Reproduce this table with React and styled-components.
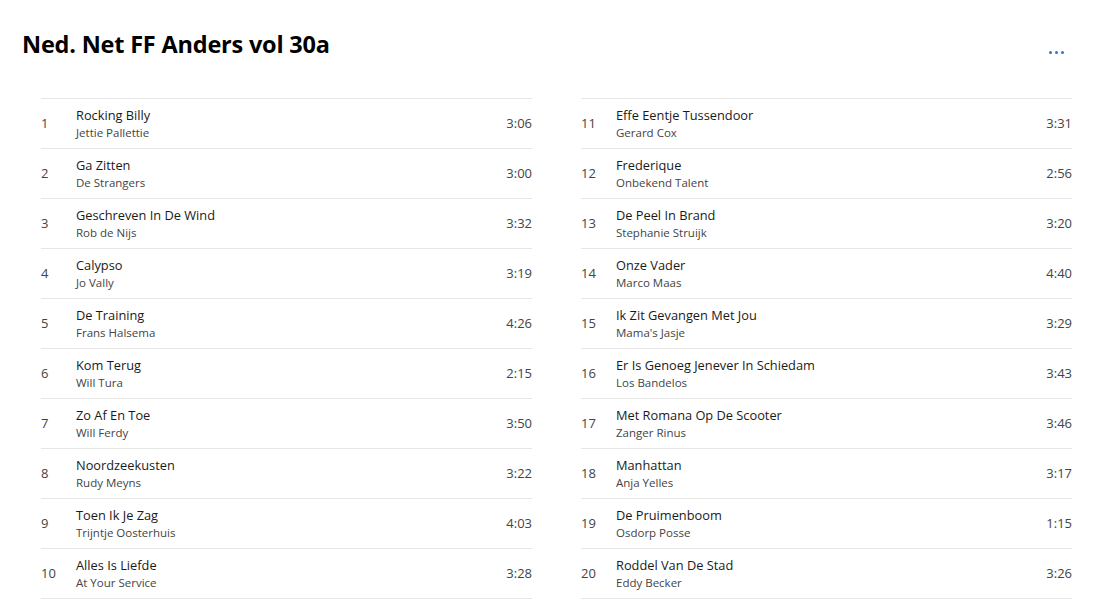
import React from "react";
import styled, { createGlobalStyle } from "styled-components";

const Global = createGlobalStyle`
  html, body { margin: 0; padding: 0; background: #ffffff; }
  body { font-family: "Open Sans", "Noto Sans", sans-serif; color: #1a1a1a; }
`;

const Page = styled.div`
  width: 1108px;
  height: 600px;
  overflow: hidden;
  box-sizing: border-box;
  padding: 0 36px 0 22px;
`;

const Header = styled.div`
  display: flex;
  align-items: flex-start;
  justify-content: space-between;
  height: 98px;
  box-sizing: border-box;
  padding-top: 28px;
`;

const Title = styled.h1`
  margin: 0;
  font-family: "Open Sans", sans-serif;
  font-weight: 700;
  font-size: 23.5px;
  line-height: 32px;
  color: #000;
  letter-spacing: -0.2px;
`;

const MoreButton = styled.button`
  border: none;
  background: transparent;
  padding: 0;
  margin: 23px 8px 0 0;
  display: flex;
  gap: 3px;
  cursor: pointer;
`;

const Dot = styled.span`
  width: 3px;
  height: 3px;
  border-radius: 50%;
  background: #2f72d6;
`;

const Columns = styled.div`
  display: grid;
  grid-template-columns: 491px 491px;
  column-gap: 49px;
  padding-left: 19px;
`;

const List = styled.div`
  display: flex;
  flex-direction: column;
  border-top: 1px solid #e6e6e6;
`;

const Row = styled.div`
  display: flex;
  align-items: center;
  height: 49px;
  border-bottom: 1px solid #e6e6e6;
`;

const Num = styled.div`
  width: 35px;
  font-size: 13px;
  color: #444;
  padding-bottom: 2px;
`;

const Info = styled.div`
  flex: 1;
  display: flex;
  flex-direction: column;
`;

const Song = styled.div`
  font-size: 12.8px;
  line-height: 17px;
  color: #1a1a1a;
`;

const Artist = styled.div`
  font-size: 11.5px;
  line-height: 17px;
  color: #444;
`;

const Dur = styled.div`
  font-size: 13px;
  color: #444;
  padding-bottom: 2px;
`;

const left = [
  ["Rocking Billy", "Jettie Pallettie", "3:06"],
  ["Ga Zitten", "De Strangers", "3:00"],
  ["Geschreven In De Wind", "Rob de Nijs", "3:32"],
  ["Calypso", "Jo Vally", "3:19"],
  ["De Training", "Frans Halsema", "4:26"],
  ["Kom Terug", "Will Tura", "2:15"],
  ["Zo Af En Toe", "Will Ferdy", "3:50"],
  ["Noordzeekusten", "Rudy Meyns", "3:22"],
  ["Toen Ik Je Zag", "Trijntje Oosterhuis", "4:03"],
  ["Alles Is Liefde", "At Your Service", "3:28"],
];

const right = [
  ["Effe Eentje Tussendoor", "Gerard Cox", "3:31"],
  ["Frederique", "Onbekend Talent", "2:56"],
  ["De Peel In Brand", "Stephanie Struijk", "3:20"],
  ["Onze Vader", "Marco Maas", "4:40"],
  ["Ik Zit Gevangen Met Jou", "Mama's Jasje", "3:29"],
  ["Er Is Genoeg Jenever In Schiedam", "Los Bandelos", "3:43"],
  ["Met Romana Op De Scooter", "Zanger Rinus", "3:46"],
  ["Manhattan", "Anja Yelles", "3:17"],
  ["De Pruimenboom", "Osdorp Posse", "1:15"],
  ["Roddel Van De Stad", "Eddy Becker", "3:26"],
];

function TrackList({ tracks, start }) {
  return (
    <List>
      {tracks.map(([song, artist, dur], i) => (
        <Row key={song}>
          <Num>{start + i}</Num>
          <Info>
            <Song>{song}</Song>
            <Artist>{artist}</Artist>
          </Info>
          <Dur>{dur}</Dur>
        </Row>
      ))}
    </List>
  );
}

export default function App() {
  return (
    <>
      <Global />
      <Page>
        <Header>
          <Title>Ned. Net FF Anders vol 30a</Title>
          <MoreButton aria-label="Meer">
            <Dot />
            <Dot />
            <Dot />
          </MoreButton>
        </Header>
        <Columns>
          <TrackList tracks={left} start={1} />
          <TrackList tracks={right} start={11} />
        </Columns>
      </Page>
    </>
  );
}
